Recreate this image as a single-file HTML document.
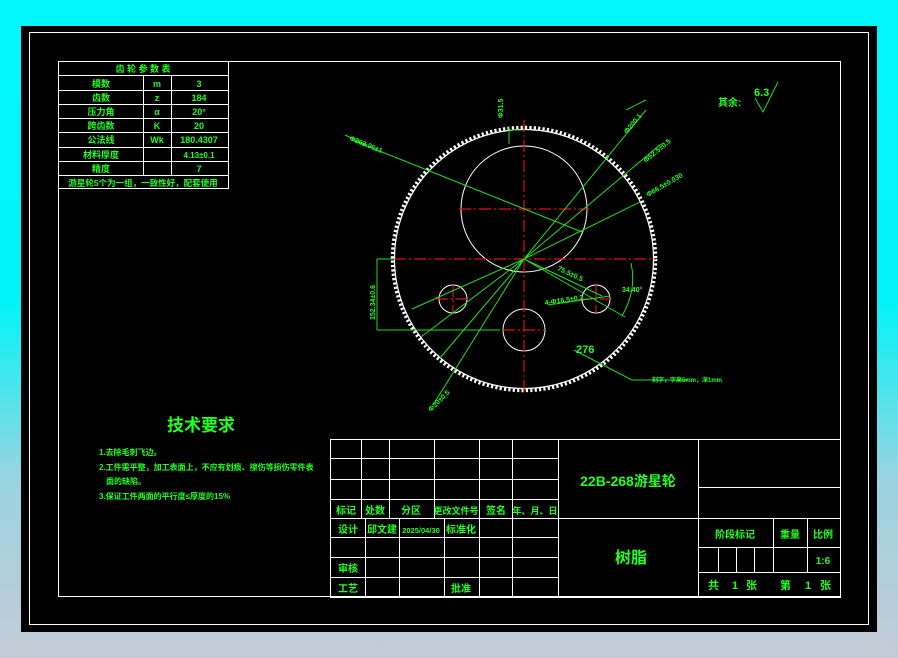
<!DOCTYPE html>
<html><head><meta charset="utf-8"><style>
html,body{margin:0;padding:0;width:898px;height:658px;overflow:hidden;background:linear-gradient(#00f8fc 0px,#00f4f8 300px,#9ad4e0 480px,#c4cad6 658px)}
svg{position:absolute;left:0;top:0}
text{font-family:"Liberation Sans","Noto Sans CJK SC",sans-serif;fill:#22ff22;font-weight:bold}
</style></head><body>
<svg width="898" height="658" viewBox="0 0 898 658">
<rect x="21" y="26" width="856" height="606" fill="#000"/>
<rect x="29.5" y="32.5" width="839" height="592" fill="none" stroke="#fff" stroke-width="1"/>
<rect x="58.5" y="61.5" width="782" height="535" fill="none" stroke="#fff" stroke-width="1"/>
<g stroke="#fff" stroke-width="1" fill="none">
<rect x="58.5" y="61.5" width="170" height="127"/>
<path d="M58 75.5H228M58 90.5H228M58 104.5H228M58 118.5H228M58 132.5H228M58 147.5H228M58 161.5H228M58 175.5H228"/>
<path d="M143.5 75V175M171.5 75V175"/>
</g>
<g font-size="9" text-anchor="middle">
<text x="143" y="72">齿 轮 参 数 表</text>
<text x="101" y="87">模数</text><text x="157" y="87">m</text><text x="199" y="87">3</text>
<text x="101" y="101">齿数</text><text x="157" y="101">z</text><text x="199" y="101">184</text>
<text x="101" y="115">压力角</text><text x="157" y="115">α</text><text x="199" y="115">20°</text>
<text x="101" y="129">跨齿数</text><text x="157" y="129">K</text><text x="199" y="129">20</text>
<text x="101" y="143">公法线</text><text x="157" y="143">Wk</text><text x="199" y="143">180.4307</text>
<text x="101" y="158">材料厚度</text><text x="199" y="158" font-size="8">4.13±0.1</text>
<text x="101" y="172">精度</text><text x="199" y="172">7</text>
<text x="143" y="186" font-size="8.5">游星轮5个为一组，一致性好，配套使用</text>
</g>
<circle cx="524" cy="259" r="129.5" fill="none" stroke="#fff" stroke-width="1.2"/>
<circle cx="524" cy="259" r="131.5" fill="none" stroke="#fff" stroke-width="3.5" stroke-dasharray="2.2 2.2"/>
<g fill="none" stroke="#fff" stroke-width="1">
<circle cx="524" cy="209" r="63"/>
<circle cx="453" cy="299" r="14"/>
<circle cx="596" cy="299" r="14"/>
<circle cx="524" cy="330" r="21"/>
</g>
<g stroke="#e01010" stroke-width="1.2" stroke-dasharray="12 3 2 3" fill="none">
<path d="M524 120V392M394 259H656M459 209H589M436 299H470M453 285V313M580 299H612M596 285V313M503 330H545"/>
</g>
<g stroke="#22dd22" stroke-width="1" fill="none">
<path d="M352 140L582 232M524 259L646 110M524 259L661 144M524 259L640 202M524 259L625 317M524 259L412 309M524 259L421 337M524 259L440 358M524 259L433 405M524 259L602 296M377 259H395M377 330H500M377 259V330M574 350L632 380H688M548 305L610 296M631 263Q637 290 622 316M509 127V144M509 130H521M345 135L367 145M626 110L646 100"/>
</g>
<g font-size="7" fill="#22ff22">
<text x="349" y="140" transform="rotate(22 349 140)">Φ262.96±1</text>
<text x="503" y="118" transform="rotate(-90 503 118)">Φ31.5</text>
<text x="627" y="134" transform="rotate(-50 627 134)">Φ200.1</text>
<text x="646" y="163" transform="rotate(-40 646 163)">Φ52.5±0.5</text>
<text x="648" y="197" transform="rotate(-30 648 197)">Φ66.5±0.030</text>
<text x="375" y="320" transform="rotate(-90 375 320)">152.34±0.6</text>
<text x="557" y="270" transform="rotate(25 557 270)">75.5±0.5</text>
<text x="545" y="305" transform="rotate(-8 545 305)">4-Φ16.5±0.2</text>
<text x="622" y="292">34.40°</text>
<text x="431" y="412" transform="rotate(-45 431 412)">Φ20±0.5</text>
<text x="652" y="382" font-size="6">刻字，字高5mm，深1mm</text>
</g>
<text x="576" y="353" font-size="11" font-weight="normal">276</text>
<text x="718" y="106" font-size="10">其余:</text>
<text x="754" y="96" font-size="11" font-weight="normal">6.3</text>
<path d="M755 98L763 112L778 82" stroke="#22dd22" fill="none" stroke-width="1"/>
<text x="167" y="431" font-size="17">技术要求</text>
<g font-size="8">
<text x="99" y="455">1.去除毛刺飞边。</text>
<text x="99" y="470">2.工件需平整，加工表面上，不应有划痕、擦伤等损伤零件表</text>
<text x="106" y="484">面的缺陷。</text>
<text x="99" y="499">3.保证工件两面的平行度≤厚度的15%</text>
</g>
<g stroke="#fff" stroke-width="1" fill="none">
<rect x="330.5" y="439.5" width="510" height="158"/>
<path d="M330 458.5H558M330 479.5H558M330 499.5H558M330 518.5H840M330 537.5H558M330 557.5H558M330 577.5H558"/>
<path d="M361.5 439V518M389.5 439V518M434.5 439V518M479.5 439V597M512.5 439V597M558.5 439V597"/>
<path d="M365.5 518V597M399.5 518V597M444.5 518V597"/>
<path d="M698.5 439V597M698 487.5H840M698 547.5H840M698 572.5H840M773.5 518V572M807.5 518V572M718.5 547V572M736.5 547V572M754.5 547V572"/>
</g>
<g font-size="10" text-anchor="middle">
<text x="346" y="514">标记</text><text x="375" y="514">处数</text><text x="411" y="514">分区</text><text x="456" y="514" font-size="9">更改文件号</text><text x="496" y="514">签名</text><text x="535" y="514" font-size="9">年、月、日</text>
<text x="348" y="533">设计</text><text x="382" y="533">邱文建</text><text x="421" y="533" font-size="7.5">2025/04/30</text><text x="461" y="533">标准化</text>
<text x="348" y="572">审核</text><text x="348" y="592">工艺</text><text x="461" y="592">批准</text>
<text x="735" y="538">阶段标记</text><text x="790" y="538">重量</text><text x="823" y="538">比例</text>
<text x="823" y="564" font-weight="normal">1:6</text>
</g>
<g font-size="11">
<text x="708" y="589">共</text><text x="732" y="589">1</text><text x="746" y="589">张</text>
<text x="780" y="589">第</text><text x="805" y="589">1</text><text x="820" y="589">张</text>
</g>
<text x="628" y="486" font-size="14" text-anchor="middle">22B-268游星轮</text>
<text x="631" y="563" font-size="16" text-anchor="middle">树脂</text>
</svg>
</body></html>
